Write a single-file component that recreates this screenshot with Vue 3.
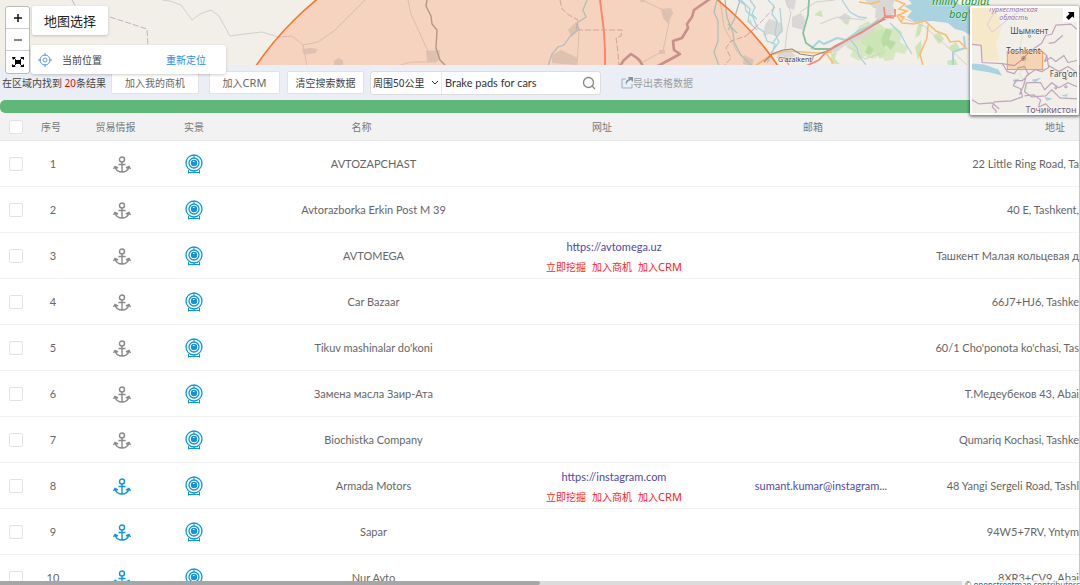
<script setup>
import { ref } from 'vue'

const radius = ref('50')
const keyword = ref('Brake pads for cars')

const rows = ref([
  { name: 'AVTOZAPCHAST', address: '22 Little Ring Road, Ta' },
  { name: 'Avtorazborka Erkin Post M 39', address: '40 E, Tashkent,' },
  { name: 'AVTOMEGA', site: 'https://avtomega.uz', address: 'Ташкент Малая кольцевая д' },
  { name: 'Car Bazaar', address: '66J7+HJ6, Tashke' },
  { name: "Tikuv mashinalar do'koni", address: "60/1 Cho'ponota ko'chasi, Tas" },
  { name: 'Замена масла Заир-Ата', address: 'Т.Медеубеков 43, Abai' },
  { name: 'Biochistka Company', address: 'Qumariq Kochasi, Tashke' },
  { name: 'Armada Motors', site: 'https://instagram.com', mail: 'sumant.kumar@instagram...', address: '48 Yangi Sergeli Road, Tashl', active: true },
  { name: 'Sapar', address: '94W5+7RV, Yntym', active: true },
  { name: 'Nur Avto', address: '8XR3+CV9, Abai', active: true },
])
</script>

<template>
  <div class="page">
    <section class="map">
      <svg class="map-art" viewBox="0 0 1080 66" preserveAspectRatio="xMinYMin slice" fill="none">
        <rect width="1080" height="66" fill="#f2efe9" />
        <g fill="#cce5b4">
          <path d="M846 41l8-5 5-10 9-5 6 5 5-3 7 6 10-2 6 5-2 10 8 5-3 7-9-2-3 8-8 1-5-6-7 4-9-3-5 5-9-5 3-5-7-4z" opacity=".75" />
          <path d="M864 30l8-6 2 8 9-3 3 9-6 8 7 5-7 8-5-7-7 4 1-9-8-4zM831 54l6-3-2 8 5 5h-9zM842 22l8-3-2 6zM918 25l5-2-3 12-5 3zM915 47l6-7 1 12-4 8zM933 36l6-4 5 7-5 5zM949 47l7-5 4 7-7 3zM947 61l8-2 3 6h-10zM814 15l7-5 2 7zM747 22l4-3 1 5zM799 19l5-3-2 8z" />
          <path d="M868 45l6 4-4 6-5-2zM886 28l6 3-3 9 7 2-5 8-5-5-3 3-2-8z" fill="#b9dda0" />
        </g>
        <g fill="#d9d8d6">
          <path d="M765 25l4-6 6 2 7 2 1 9-7 4-6-2-7 2zM792 17l9-4 4 7-2 10-11-3zM785 0h11l-2 10-7-3zM826 52l15-8 9-7 12-4 9-7 5 3-15 10-13 4-10 8-12 3zM876 4l14-2 6 9-10 10-11-3zM865 0h30l-3 7-18 1z" />
          <path d="M780 50l10 1 6 5-10 4-10-2zM838 18l7-5 6 4-5 6z" />
        </g>
        <path d="M909 0h45l6 5 10-1v31l-7-4-8-2-7-6-16-2-17 1-8-5 5-6-8-5 8-2z" fill="#aad3df" />
        <g stroke="#aad3df" stroke-width="1.3">
          <path d="M738 0l7 5 1 6 7 6 4 10 7 5 3 9 8 3-3 10-5 9M768 0l6 6-2 8 5 7-2 13 4 8-8 11M750 0l5 7-3 7 5 5M741 0l9 9-2 12 9 9M842 0l8 12 9 5 8 1M850 39l7 9 2 8 7 9M890 23l10 10 7 13 5 8M780 8l2 22-10 14" />
          <path d="M811 49l8-8 5 3 13-6 9 2 12-9 12-5 9-7" stroke-width="2" />
          <path d="M953 66v-14l12-4-1-12" stroke-width="2" />
        </g>
        <g stroke="#d2d0cd" stroke-width="1">
          <path d="M162 0l8 1 11 4 11 15 8-6 11-4 8 6 11 20 15-2 17-2 16 5 14-1 11 9M786 0l5 13-4 18-2 19M800 12l16-10 19-2M820 24l17-7 28 3M900 17l24 9 26 23 18 17M848 46l17 13 16-6" />
        </g>
        <path d="M72 0l4 7M110 17l37 12 1 17M775 7l-15 16-12 11" stroke="#c9aec6" stroke-width="1" stroke-dasharray="6 2" />
        <path d="M809 0l-1 15-5 18 3 10 9 6h16" stroke="#84c3a0" stroke-width="1.8" />
        <g stroke="#fabd70" stroke-width="1.6">
          <path d="M755 66l16-11 15-4 33 2 13-1M895 0l10 4-6 5 8 2-10 5 5 7 12 1 11-3 11 10 10 4 4 7 9-1 8 8M928 25l-1 13-7 16 3 12M826 53l7 10" />
          <path d="M859 2l12 2 9-3M897 15l7 2-3 5" />
        </g>
        <path d="M764 62l8-8 11-4 9-1 8 5 13 2 17-6 26-15 29-16" stroke="#95877c" stroke-width="1.1" />
        <path d="M806 66l13-6 7-8 9-6 26-13 20-13 5-4h9V9M884 7l1 10 9 1" stroke="#f08b78" stroke-width="1.7" />
        <path d="M784 57l5 8M814 55l-4 10" stroke="#f08b78" stroke-width="1.2" />

        <circle cx="517" cy="244" r="316" fill="#ff7832" fill-opacity=".23" />
        <g fill="#dec1b1">
          <path d="M302 49l9-1 7 1-3 4-11 2zM334 61l4-3 5 2v6h-9zM426 51l14-1-1 10-4 3-8-2zM552 55l9-5 17 8-2 7-24-2zM661 9l10-1 2 5-5 11-5-6zM568 30l8-8 3 8-7 7zM744 55l10 5-2 6-9-2zM639 0h7l-4 3zM659 50h6v4h-6z" />
        </g>
        <g stroke="#dabdad" stroke-width="1">
          <path d="M303 45l4 21M303 45l15-3 16-11 31-31M408 0l3 14 21 46M397 66l14-4h21M642 0l21 10 6 12-6 29-20 11M579 31l-2 35M720 0l4 27 14 26 15 13" />
        </g>
        <path d="M427 0l-1 6 5 10 1 8 5 6-1 18 4 12 6 6" stroke="#b69688" stroke-width="1.4" />
        <path d="M587 0l-4 10 3 7-9 6 2 6-8 6-7 10-6 2-6 7-4 12M717 0l-3 12 4 9v20l-4 11 5 14M725 0l2 17 6 16 1 9 7 13 11 11M740 0l-6 20-6 10M728 24l9 9" stroke="#afbfb8" stroke-width="1.3" />
        <path d="M560 0l2 9 7 6 9 5-2 10h46l-1 6-5 2 2 15 1 13M755 28l-9 8-15 5-5 7 5 10-7 8" stroke="#d2a29d" stroke-width="1" stroke-dasharray="6 2" />
        <path d="M600 0l4 32 1 18v16" stroke="#fd8566" stroke-width="1.9" />
        <path d="M620 66l4-6 7-6 6 4 3 3 3 5M658 66l11-6 11-6-6-4-1-9 9-3 6-10-1-4 5-7 2-7 16-11" stroke="#c98f8d" stroke-width="2.6" stroke-linejoin="round" />
        <circle cx="517" cy="244" r="316" stroke="#ff7429" stroke-width="1.6" />
        <g class="map-label">
          <text x="778" y="62" font-size="7">G'azalkent</text>
          <text class="park" x="932" y="5" font-size="11">milliy tabiat</text>
          <text class="park" x="949" y="18" font-size="11">bog'i</text>
        </g>
      </svg>

      <div class="zoom-control">
        <button type="button" aria-label="放大"><svg viewBox="0 0 10 10"><path d="M5 1v8M1 5h8" /></svg></button>
        <button type="button" aria-label="缩小"><svg viewBox="0 0 10 10"><path d="M1 5h8" stroke-width="1" /></svg></button>
        <button type="button" aria-label="全屏">
          <svg viewBox="0 0 12 12"><path d="M1 1l10 10M11 1L1 11" stroke-width="1" /><path d="M3 4h6v4H3zM0 1h4L1 4zM12 1v3L8 1zM0 11V8l4 3zM12 11H8l4-3z" fill="#000" stroke="none" /></svg>
        </button>
      </div>
      <button type="button" class="map-select">地图选择</button>
      <div class="location">
        <svg class="target" viewBox="0 0 14 14"><circle cx="7" cy="7" r="5" /><circle cx="7" cy="7" r="2" /><path d="M7 0v3M7 11v3M0 7h3M11 7h3" /></svg>
        <span>当前位置</span>
        <a href="#">重新定位</a>
      </div>

      <aside class="minimap">
        <svg viewBox="0 0 104 104" fill="none">
          <rect width="104" height="104" fill="#f2efe9" />
          <path d="M0 0h23l6 20-5 16 3 16-17 1-1-16-9-1z" fill="#f6e9c9" />
          <path d="M45 20l5 8-3 13 8 10-8 14 8 15M78 70l10-8 8 5" stroke="#e4ebd9" stroke-width="2" />
          <path d="M0 55l12 1 14 5 4 6-12-3-18-3zM59 71l10-2-7 5zM72 88l8 2-6 2zM88 87l7-2-1 3zM40 71l7-1-4 5z" fill="#a9d4df" />
          <g stroke="#bda5be" stroke-width="1.2" stroke-linejoin="round">
            <path d="M0 36l9 1 1 17 20 1 5 8 7 2 4-6 6-1 4 8-6 6h-7l-2 5 7 3 2 8-11 4-17 1-2 5 4 4-2 5M30 55l12 2 8-6 7-8 12-8 4-8 6-1 4-9 15-1 6 5M66 40l8 7-2 6 6-4 5 4 8-6 4 7 9-2M74 47l2 12-7 4-6-2-9 6-3 10-4 9M54 74h14l4 7 7-7 7 5 9-5 9 4M52 87l9-1 7 5-2 7 7-3 6 6M0 91l7 4 13-1 7 6M90 27l-8 7-6 1M76 57l10 6 9-5 9 6M54 74l-2 9 7 5 14-1 6-6 8 8 17 1" />
            <path d="M23 3l-8 13 5 8 17-14 8-5M37 18l10 5 8-3" stroke="#decfe0" stroke-width="1" />
            <circle cx="83" cy="79" r="1" /><circle cx="93" cy="78" r="1" />
          </g>
          <g stroke="#777" stroke-width=".7"><circle cx="57" cy="28" r="1.2" /><circle cx="51" cy="50" r="2" /><circle cx="93" cy="70" r="1" /></g>
          <circle cx="51" cy="50" r="1" fill="#666" />
          <g class="map-label">
            <text class="region" x="16" y="4" font-size="7">Туркестанская</text>
            <text class="region" x="27" y="12" font-size="7">область</text>
            <text x="38" y="26" font-size="8">Шымкент</text>
            <text x="34" y="46" font-size="8">Toshkent</text>
            <text x="77" y="68" font-size="8">Farg'on</text>
            <text class="country" x="53" y="104" font-size="9">Точикистон</text>
          </g>
          <path d="M35 43h35v18H35z" fill="#ff7800" fill-opacity=".22" stroke="#f39a52" />
        </svg>
        <button type="button" aria-label="收起小地图"><svg viewBox="0 0 10 10"><path d="M2 1h7v7L7 6 3 10 0 7l4-4z" /></svg></button>
      </aside>
    </section>

    <section class="toolbar">
      <p class="count">在区域内找到 <b>20</b>条结果</p>
      <button type="button" class="btn">加入我的商机</button>
      <button type="button" class="btn">加入<span class="latin">CRM</span></button>
      <button type="button" class="btn clear">清空搜索数据</button>
      <div class="search">
        <div class="radius">
          <select v-model="radius" aria-label="范围"><option value="50">周围50公里</option></select>
          <svg viewBox="0 0 8 6"><path d="M1 1l3 3 3-3" /></svg>
        </div>
        <input v-model="keyword" type="text" aria-label="关键词" />
        <button type="button" aria-label="搜索"><svg viewBox="0 0 14 14"><circle cx="6.5" cy="6.5" r="5" /><path d="M10 10l3 3" /></svg></button>
      </div>
      <button type="button" class="export">
        <svg viewBox="0 0 12 12"><path d="M5 2H1v9h10V7" fill="none" stroke="#9aafc3" /><path d="M7 0h5v5l-2-2C7 4 6 5 5 8c-1-3 0-5 3-6z" fill="#7896b1" /></svg>导出表格数据
      </button>
    </section>

    <div class="progress"></div>

    <main class="results">
      <table>
        <colgroup>
          <col class="c-check" /><col class="c-index" /><col class="c-trade" /><col class="c-street" />
          <col class="c-name" /><col class="c-site" /><col class="c-mail" /><col class="c-address" />
        </colgroup>
        <thead>
          <tr>
            <th class="check"><input type="checkbox" aria-label="全选" /></th>
            <th class="h-index">序号</th>
            <th class="h-trade">贸易情报</th>
            <th>实景</th>
            <th class="h-wide">名称</th>
            <th class="h-wide">网址</th>
            <th class="h-mail">邮箱</th>
            <th class="h-address">地址</th>
          </tr>
        </thead>
        <tbody>
          <tr v-for="(row, i) in rows" :key="i">
            <td class="check"><input type="checkbox" :aria-label="row.name" /></td>
            <td>{{ i + 1 }}</td>
            <td>
              <svg class="anchor" :class="{ active: row.active }" viewBox="0 0 18 18">
                <circle cx="9" cy="3.5" r="2.5" /><path d="M9 6v10M5.500 8.500h7M2 11c1 3 3 5 7 5s6-2 7-5M.500 13l1.500-2.500 3 1.500M17.500 13L16 10.500 13 12" />
              </svg>
            </td>
            <td>
              <svg class="camera" viewBox="0 0 18 20">
                <circle cx="9" cy="9" r="8" /><circle cx="9" cy="9" r="5" /><circle cx="9" cy="9" r="3.200" fill="#1296db" stroke="none" />
                <path d="M9 1v3M3.500 16v3.500M9 17v2M14.500 16v3.500M3.500 18.500h11" stroke-width="1" /><path d="M8 7.500h1.500" stroke="#fff" stroke-width="1" />
              </svg>
            </td>
            <td>{{ row.name }}</td>
            <td class="site">
              <template v-if="row.site">
                <a href="#" class="link">{{ row.site }}</a>
                <div class="actions"><a href="#">立即挖掘</a><a href="#">加入商机</a><a href="#">加入<span class="latin">CRM</span></a></div>
              </template>
            </td>
            <td class="mail"><a v-if="row.mail" href="#" class="link">{{ row.mail }}</a></td>
            <td class="address">{{ row.address }}</td>
          </tr>
        </tbody>
      </table>
    </main>

    <div class="scroll-x"><i></i></div>
    <div class="scroll-y"></div>
    <footer class="credit">© <a href="#">openstreetmap</a> contributors</footer>
  </div>
</template>

<style>
body {
  margin: 0;
}
</style>

<style scoped>
.page {
  position: relative;
  display: flex;
  flex-direction: column;
  height: 100vh;
  overflow: hidden;
  background: #fff;
  color: #666;
  font: 11px/14px Lato, "Noto Sans CJK SC", sans-serif;
}
.page * {
  box-sizing: border-box;
}
button,
input,
select {
  margin: 0;
  padding: 0;
  border: 0;
  background: none;
  color: inherit;
  font: inherit;
}
button {
  display: flex;
  align-items: center;
  justify-content: center;
}
a {
  text-decoration: none;
}
.latin {
  font-family: "Noto Sans", sans-serif;
  font-size: 11px;
}
.map {
  position: relative;
  z-index: 2;
  flex: 0 0 65px;
}
.map-art {
  display: block;
  width: 100%;
  height: 65px;
}
.map-label {
  font-family: "Noto Sans", sans-serif;
  fill: #444;
  stroke: #fff;
  stroke-width: 1px;
  stroke-opacity: 0.6;
  paint-order: stroke;
}
.park {
  fill: #149014;
  font-style: italic;
}
.region {
  fill: #9a6fa0;
  font-style: italic;
}
.country {
  fill: #745f83;
}
.zoom-control {
  position: absolute;
  top: 6px;
  left: 5px;
  width: 25px;
  border: 1px solid #bdbbb7;
  border-radius: 3px;
  background: #fff;
}
.zoom-control button {
  width: 100%;
  height: 22px;
  border-bottom: 1px solid #ccc;
}
.zoom-control button:last-child {
  border-bottom: 0;
}
.zoom-control svg {
  width: 10px;
  height: 10px;
  fill: none;
  stroke: #111;
  stroke-width: 1.5;
}
.zoom-control button:last-child svg {
  width: 12px;
  height: 12px;
}
.map-select {
  position: absolute;
  top: 6px;
  left: 32px;
  padding: 0 12px;
  height: 29px;
  border-radius: 2px;
  background: #fff;
  box-shadow: 0 1px 3px rgba(0, 0, 0, 0.2);
  color: #222;
  font-size: 13px;
}
.location {
  position: absolute;
  top: 45px;
  left: 31px;
  display: flex;
  align-items: center;
  width: 195px;
  height: 29px;
  padding: 0 20px 0 7px;
  border-radius: 3px;
  background: #fff;
  box-shadow: 0 1px 3px rgba(0, 0, 0, 0.2);
  color: #444;
  font-size: 10px;
}
.location a {
  margin-left: auto;
  color: #1e8cf0;
}
.target {
  width: 14px;
  height: 14px;
  margin-right: 10px;
  fill: none;
  stroke: #5795ee;
}
.minimap {
  position: absolute;
  top: 6px;
  right: 1px;
  width: 109px;
  height: 109px;
  border: 2px solid #fff;
  border-radius: 2px;
  box-shadow: 0 1px 3px 1px rgba(0, 0, 0, 0.45);
}
.minimap > svg {
  display: block;
  width: 100%;
  height: 100%;
}
.minimap button {
  position: absolute;
  top: 0;
  right: 0;
  width: 14px;
  height: 14px;
  background: #fff;
}
.minimap button svg {
  width: 9px;
  height: 9px;
}
.toolbar {
  display: flex;
  align-items: center;
  flex: 0 0 35px;
  padding-left: 2px;
  background: #ebeff5;
  font-family: "Noto Sans", "Noto Sans CJK SC", sans-serif;
  font-size: 10px;
}
.count {
  flex: 0 0 109px;
  margin: 0;
  color: #444;
  white-space: nowrap;
}
.count b {
  color: #f00;
  font-weight: 400;
}
.btn {
  width: 88px;
  height: 23px;
  border: 1px solid #e2e2e2;
  border-radius: 2px;
  background: #fff;
}
.btn + .btn {
  width: 71px;
  margin-left: 10px;
}
.btn + .clear {
  width: 77px;
  margin-left: 7px;
  color: #444;
}
.search {
  display: flex;
  align-items: center;
  width: 231px;
  height: 24px;
  margin-left: 6px;
  border: 1px solid #ddd;
  border-radius: 3px;
  background: #fff;
  color: #333;
}
.radius {
  display: flex;
  align-items: center;
  align-self: stretch;
  width: 71px;
  padding: 0 2px;
  border-right: 1px solid #e6e6e6;
}
.radius select {
  flex: 1;
  min-width: 0;
  appearance: none;
}
.radius svg {
  width: 8px;
  height: 6px;
  fill: none;
  stroke: #333;
}
.search input {
  flex: 1;
  min-width: 0;
  padding-left: 3px;
  font-family: Lato, "Noto Sans CJK SC", sans-serif;
  font-size: 11px;
}
.search button {
  width: 23px;
}
.search button svg {
  width: 14px;
  height: 14px;
  fill: none;
  stroke: #888;
  stroke-width: 1.3;
}
.export {
  margin-left: 20px;
  color: #9b9da1;
}
.export svg {
  width: 12px;
  height: 12px;
}
.progress {
  flex: 0 0 13px;
  border-radius: 5px 0 0 5px;
  background: #5fb878;
}
.results {
  flex: 1;
  min-height: 0;
  overflow: hidden;
}
table {
  width: 100%;
  table-layout: fixed;
  border-spacing: 0;
}
.c-check { width: 32px; }
.c-index { width: 42px; }
.c-trade { width: 95px; }
.c-street { width: 50px; }
.c-name { width: 309px; }
.c-site { width: 172px; }
.c-mail { width: 222px; }
.c-address { width: 158px; }
th {
  height: 28px;
  padding: 0;
  border-bottom: 1px solid #e6e6e6;
  background: #f2f2f2;
  color: #777;
  font-size: 10px;
  font-weight: 400;
}
td {
  height: 46px;
  padding: 0;
  border-bottom: 1px solid #f2f2f2;
  text-align: center;
  white-space: nowrap;
}
td svg {
  display: block;
  margin: 0 auto;
}
th.h-index { padding-right: 4px; }
th.h-trade { padding-right: 12px; }
th.h-wide { padding-right: 24px; }
th.h-mail { padding-left: 4px; }
th.h-address {
  padding-right: 15px;
  text-align: right;
}
.site { padding-top: 2px; }
.mail { padding-left: 20px; }
.address {
  padding-right: 1px;
  text-align: right;
}
.check input {
  display: block;
  width: 14px;
  height: 14px;
  margin: 0 0 0 9px;
  appearance: none;
  border: 1px solid #e2e2e2;
  border-radius: 2px;
  background: #fff;
}
.anchor {
  width: 18px;
  height: 18px;
  margin-top: 2px;
  fill: none;
  stroke: #8a8a8a;
  stroke-width: 1.4;
}
.anchor.active {
  stroke: #1296db;
}
.camera {
  width: 18px;
  height: 20px;
  fill: none;
  stroke: #1296db;
  stroke-width: 1.3;
}
.link {
  color: #5247a6;
}
.actions {
  display: flex;
  justify-content: center;
  gap: 6px;
  margin-top: 6px;
  font-size: 10px;
}
.actions a {
  color: #f22;
}
.scroll-x {
  position: absolute;
  right: 115px;
  bottom: 0;
  left: 0;
  height: 4px;
  background: #dcdcdc;
}
.scroll-x i {
  display: block;
  width: 56%;
  height: 100%;
  border-radius: 0 2px 2px 0;
  background: #a6a6a6;
}
.scroll-y {
  position: absolute;
  top: 0;
  right: 0;
  bottom: 0;
  width: 1px;
  background: #c8c8c8;
}
.credit {
  position: absolute;
  right: 0;
  bottom: 0;
  height: 5px;
  padding-left: 3px;
  overflow: hidden;
  background: rgba(255, 255, 255, 0.75);
  font-family: "Noto Sans", sans-serif;
  font-size: 8px;
  line-height: 10px;
}
.credit a {
  color: #0078a8;
}
</style>
